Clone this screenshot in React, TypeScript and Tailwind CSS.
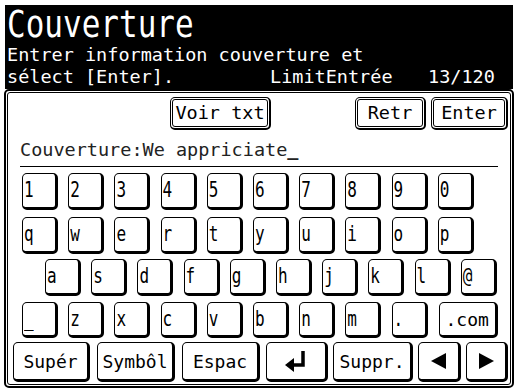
import React from 'react';

const mono = 'font-["DejaVu_Sans_Mono",monospace]';

const rows1 = ['1', '2', '3', '4', '5', '6', '7', '8', '9', '0'];
const rows2 = ['q', 'w', 'e', 'r', 't', 'y', 'u', 'i', 'o', 'p'];
const rows3 = ['a', 's', 'd', 'f', 'g', 'h', 'j', 'k', 'l', '@'];
const rows4 = ['_', 'z', 'x', 'c', 'v', 'b', 'n', 'm', '.'];

function Key({ label, w = 'w-[36px]' }: { label: string; w?: string }) {
  return (
    <div
      className={`${w} h-full shrink-0 rounded-[5px] border border-black border-r-[3px] border-b-[3px] bg-white pl-px pt-px`}
    >
      <span className={`${mono} inline-block origin-top-left scale-y-[1.3] text-[16px] leading-[16px] text-black`}>
        {label}
      </span>
    </div>
  );
}

function WideKey({ w, children }: { w: string; children: React.ReactNode }) {
  return (
    <div
      className={`${w} h-full shrink-0 rounded-[5px] border border-black border-r-[3px] border-b-[3px] bg-white flex items-center justify-center ${mono} text-[18px] text-black`}
    >
      {children}
    </div>
  );
}

function FuncButton({ w, ml, label }: { w: string; ml: string; label: string }) {
  return (
    <div className={`${w} ${ml} h-full shrink-0 rounded-[5px] border border-black border-r-2 border-b-2 p-px`}>
      <div className={`h-full rounded-[3px] border border-black flex items-center justify-center ${mono} text-[18.5px] text-black`}>
        {label}
      </div>
    </div>
  );
}

export default function App() {
  return (
    <div className="w-[517px] h-[390px] bg-white overflow-hidden pt-[5px]">
      {/* header */}
      <div className={`ml-[5px] w-[508px] h-[84px] bg-black text-white px-[2px] ${mono}`}>
        <div className="h-[39px] pt-px">
          <span className="inline-block origin-top-left scale-y-[1.2] text-[31px] leading-[31px]">Couverture</span>
        </div>
        <div className="text-[18.5px] leading-[22px] whitespace-pre">Entrer information couverture et</div>
        <div className="flex text-[18.5px] leading-[22px] whitespace-pre">
          <span className="w-[263px]">sélect [Enter].</span>
          <span className="w-[158px]">LimitEntrée</span>
          <span>13/120</span>
        </div>
      </div>

      {/* panel */}
      <div className="ml-[4px] w-[510px] h-[299px] rounded-[5px] border-2 border-black p-px">
        <div className="h-full rounded-[3px] border border-black">
          <div className="mt-[4px] h-[33px] flex">
            <FuncButton w="w-[101px]" ml="ml-[162px]" label="Voir txt" />
            <FuncButton w="w-[71px]" ml="ml-[84px]" label="Retr" />
            <FuncButton w="w-[77px]" ml="ml-[5px]" label="Enter" />
          </div>

          <div className={`mt-[9px] ml-[12px] w-[478px] border-b border-black pb-[5px] ${mono} text-[18.5px] leading-[22px] text-[#222] whitespace-pre`}>
            Couverture:We appriciate<span className="font-bold">_</span>
          </div>

          <div className="mt-[6px] h-[37px] ml-[14px] flex gap-[10.2px]">
            {rows1.map((k) => (
              <Key key={k} label={k} />
            ))}
          </div>
          <div className="mt-[7px] h-[37px] ml-[14px] flex gap-[10.2px]">
            {rows2.map((k) => (
              <Key key={k} label={k} />
            ))}
          </div>
          <div className="mt-[5px] h-[37px] ml-[37px] flex gap-[10.2px]">
            {rows3.map((k) => (
              <Key key={k} label={k} />
            ))}
          </div>
          <div className="mt-[6px] h-[36px] ml-[14px] flex gap-[10.2px]">
            {rows4.map((k) => (
              <Key key={k} label={k} />
            ))}
            <WideKey w="w-[59px] ml-[1px]">.com</WideKey>
          </div>

          <div className="mt-[4px] h-[40px] ml-[5px] flex">
            <WideKey w="w-[77px]">Supér</WideKey>
            <div className="ml-[7px]">
              <WideKey w="w-[78px]">Symbôl</WideKey>
            </div>
            <div className="ml-[7px]">
              <WideKey w="w-[78px]">Espac</WideKey>
            </div>
            <div className="ml-[6px]">
              <WideKey w="w-[62px]">
                <svg width="24" height="24" viewBox="0 0 24 24">
                  <path d="M19 2v14H9" fill="none" stroke="#000" strokeWidth="3.5" />
                  <path d="M1 16l9-7v14z" fill="#000" />
                </svg>
              </WideKey>
            </div>
            <div className="ml-[5px]">
              <WideKey w="w-[80px]">Suppr.</WideKey>
            </div>
            <div className="ml-[5px]">
              <WideKey w="w-[43px]">
                <svg width="16" height="16" viewBox="0 0 16 16">
                  <path d="M0 8L15 0v16z" fill="#000" />
                </svg>
              </WideKey>
            </div>
            <div className="ml-[5px]">
              <WideKey w="w-[42px]">
                <svg width="16" height="16" viewBox="0 0 16 16">
                  <path d="M16 8L1 0v16z" fill="#000" />
                </svg>
              </WideKey>
            </div>
          </div>
        </div>
      </div>
    </div>
  );
}
